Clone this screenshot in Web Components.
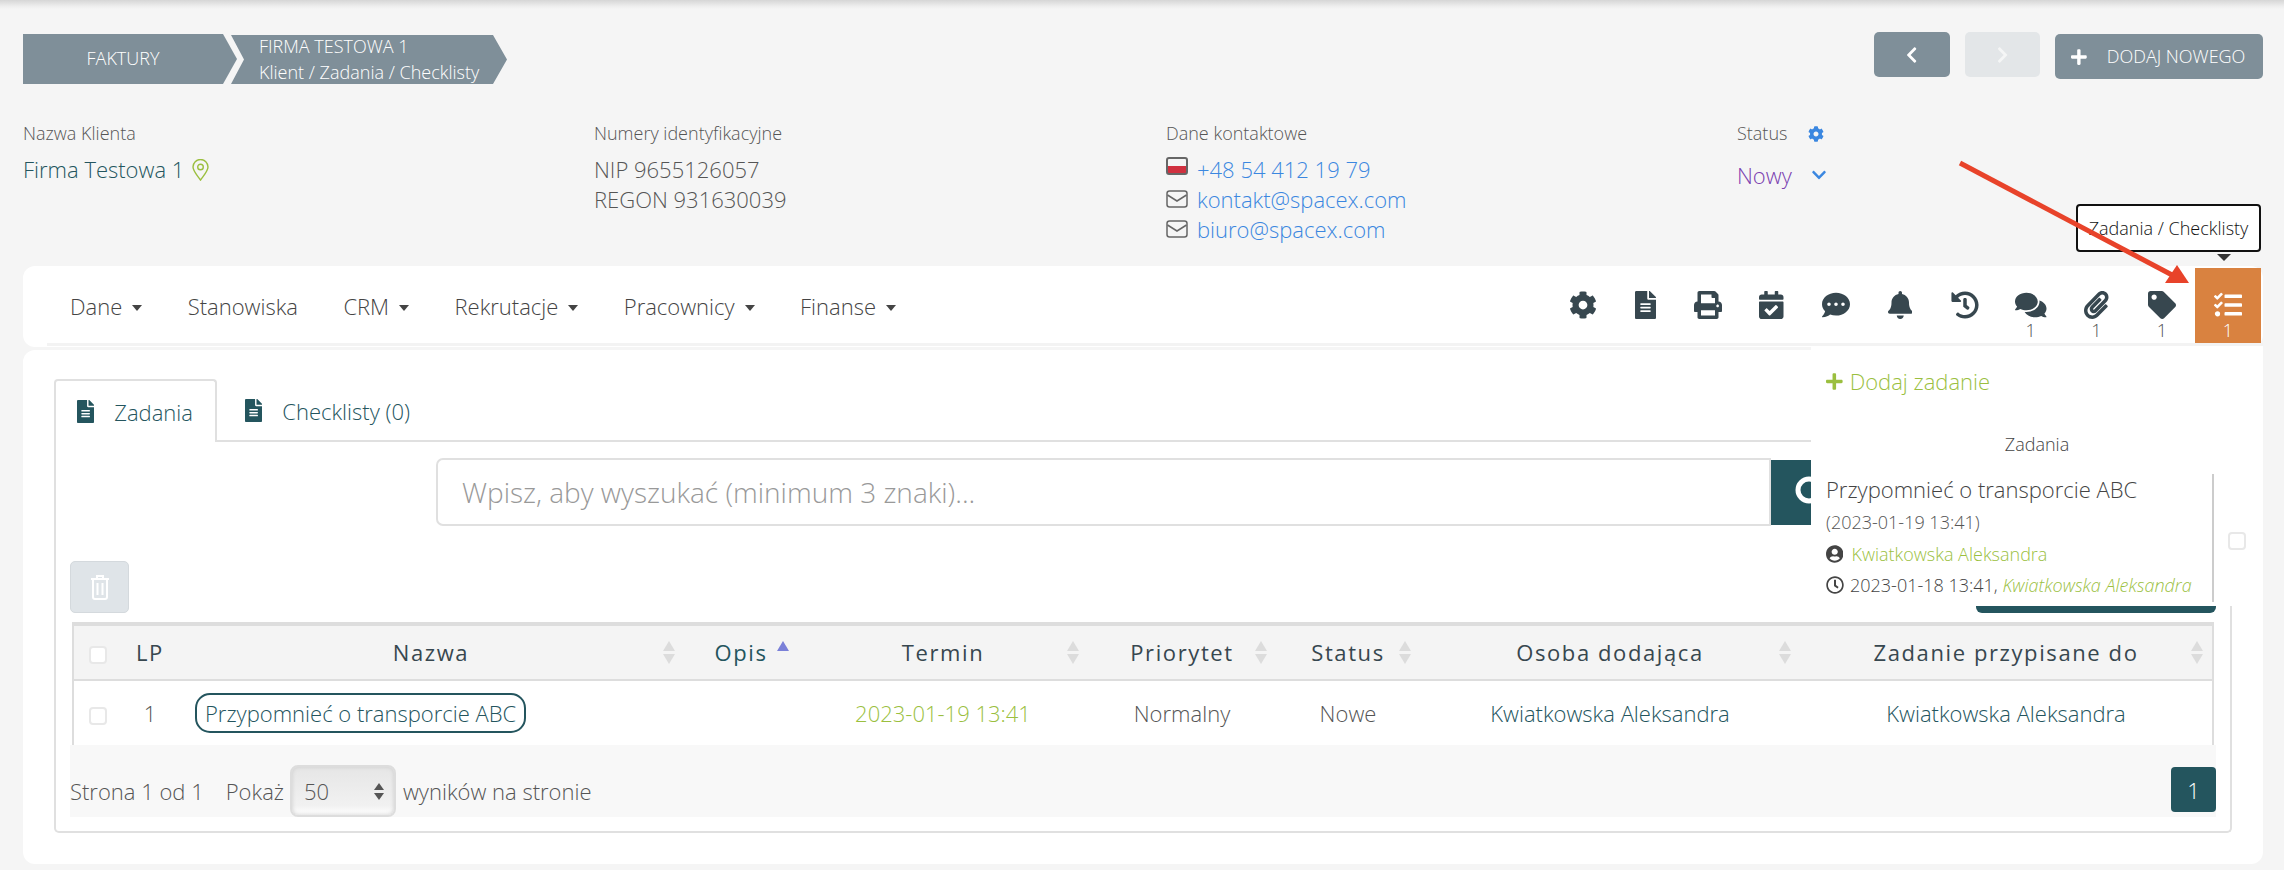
<!DOCTYPE html>
<html lang="pl">
<head>
<meta charset="utf-8">
<title>Firma Testowa 1</title>
<style>
  html, body { margin: 0; padding: 0; overflow: hidden; }
  body {
    width: 2284px; height: 870px; position: relative;
    background: #f5f5f5; color: #555;
    font-family: "Open Sans", "Liberation Sans", sans-serif; font-weight: 300;
  }
</style>
</head>
<body>
<top-shade></top-shade>
<page-header></page-header>
<client-info></client-info>
<nav-bar></nav-bar>
<task-card></task-card>
<red-arrow></red-arrow>

<script>
const ICONS = {
  cog: [512, 512, 'M487.4 315.7l-42.6-24.6c4.3-23.2 4.3-47 0-70.2l42.6-24.6c4.9-2.8 7.1-8.6 5.5-14-11.1-35.6-30-67.8-54.7-94.6-3.8-4.1-10-5.1-14.8-2.3L380.8 110c-17.9-15.4-38.5-27.3-60.8-35.1V25.8c0-5.6-3.9-10.5-9.4-11.7-36.7-8.2-74.3-7.8-109.2 0-5.5 1.2-9.4 6.1-9.4 11.7V75c-22.2 7.9-42.8 19.8-60.8 35.1L88.7 85.5c-4.9-2.8-11-1.9-14.8 2.3-24.7 26.7-43.6 58.9-54.7 94.6-1.7 5.4.6 11.2 5.5 14L67.3 221c-4.3 23.2-4.3 47 0 70.2l-42.6 24.6c-4.9 2.8-7.1 8.6-5.5 14 11.1 35.6 30 67.8 54.7 94.6 3.8 4.1 10 5.1 14.8 2.3l42.6-24.6c17.9 15.4 38.5 27.3 60.8 35.1v49.2c0 5.6 3.9 10.5 9.4 11.7 36.7 8.2 74.3 7.8 109.2 0 5.5-1.2 9.4-6.1 9.4-11.7v-49.2c22.2-7.9 42.8-19.8 60.8-35.1l42.6 24.6c4.9 2.8 11 1.9 14.8-2.3 24.7-26.7 43.6-58.9 54.7-94.6 1.5-5.5-.7-11.3-5.6-14.1zM256 336c-44.1 0-80-35.9-80-80s35.9-80 80-80 80 35.9 80 80-35.9 80-80 80z'],
  file: [384, 512, 'M224 136V0H24C10.7 0 0 10.7 0 24v464c0 13.3 10.7 24 24 24h336c13.3 0 24-10.7 24-24V160H248c-13.2 0-24-10.8-24-24zm64 236c0 6.6-5.4 12-12 12H108c-6.6 0-12-5.4-12-12v-8c0-6.6 5.4-12 12-12h168c6.6 0 12 5.4 12 12v8zm0-64c0 6.6-5.4 12-12 12H108c-6.6 0-12-5.4-12-12v-8c0-6.6 5.4-12 12-12h168c6.6 0 12 5.4 12 12v8zm0-72v8c0 6.6-5.4 12-12 12H108c-6.6 0-12-5.4-12-12v-8c0-6.6 5.4-12 12-12h168c6.6 0 12 5.4 12 12zm96-114.1v6.1H256V0h6.1c6.4 0 12.5 2.5 17 7l97.9 98c4.5 4.5 7 10.6 7 16.9z'],
  print: [512, 512, 'M448 192V77.25c0-8.49-3.37-16.62-9.37-22.63L393.37 9.37c-6-6-14.14-9.37-22.63-9.37H96C78.33 0 64 14.33 64 32v160c-35.35 0-64 28.65-64 64v112c0 8.84 7.16 16 16 16h48v96c0 17.67 14.33 32 32 32h320c17.67 0 32-14.33 32-32v-96h48c8.84 0 16-7.16 16-16V256c0-35.35-28.65-64-64-64zm-64 256H128v-96h256v96zm0-224H128V64h192v48c0 8.84 7.16 16 16 16h48v96zm48 72c-13.25 0-24-10.75-24-24 0-13.26 10.75-24 24-24s24 10.74 24 24c0 13.25-10.75 24-24 24z'],
  calendar: [448, 512, 'M436 160H12c-6.627 0-12-5.373-12-12v-36c0-26.51 21.49-48 48-48h48V12c0-6.627 5.373-12 12-12h40c6.627 0 12 5.373 12 12v52h128V12c0-6.627 5.373-12 12-12h40c6.627 0 12 5.373 12 12v52h48c26.51 0 48 21.49 48 48v36c0 6.627-5.373 12-12 12zM12 192h424c6.627 0 12 5.373 12 12v260c0 26.51-21.49 48-48 48H48c-26.51 0-48-21.49-48-48V204c0-6.627 5.373-12 12-12zm333.296 95.947l-28.169-28.398c-4.667-4.705-12.265-4.736-16.970-.068L194.12 364.665l-45.98-46.352c-4.667-4.705-12.266-4.736-16.971-.068l-28.397 28.17c-4.705 4.667-4.736 12.265-.068 16.970l82.601 83.269c4.667 4.705 12.265 4.736 16.970.068l142.953-141.805c4.705-4.667 4.736-12.265.068-16.970z'],
  dots: [512, 512, 'M256 32C114.6 32 0 125.1 0 240c0 49.6 21.4 95 57 130.7C44.5 421.1 2.7 466 2.2 466.5c-2.2 2.3-2.8 5.7-1.5 8.7S4.8 480 8 480c66.3 0 116-31.8 140.6-51.4 32.7 12.3 69 19.4 107.4 19.4 141.4 0 256-93.1 256-208S397.4 32 256 32zM128 272c-17.7 0-32-14.3-32-32s14.3-32 32-32 32 14.3 32 32-14.3 32-32 32zm128 0c-17.7 0-32-14.3-32-32s14.3-32 32-32 32 14.3 32 32-14.3 32-32 32zm128 0c-17.7 0-32-14.3-32-32s14.3-32 32-32 32 14.3 32 32-14.3 32-32 32z'],
  bell: [448, 512, 'M224 512c35.32 0 63.97-28.65 63.97-64H160.03c0 35.35 28.65 64 63.97 64zm215.39-149.71c-19.32-20.76-55.47-51.99-55.47-154.29 0-77.7-54.48-139.9-127.94-155.16V32c0-17.67-14.32-32-31.98-32s-31.98 14.33-31.98 32v20.84C118.56 68.1 64.08 130.3 64.08 208c0 102.3-36.15 133.53-55.47 154.29-6 6.45-8.66 14.16-8.61 21.71.11 16.4 12.98 32 32.1 32h383.8c19.12 0 32-15.6 32.1-32 .05-7.55-2.61-15.27-8.61-21.71z'],
  history: [512, 512, 'M504 255.531c.253 136.64-111.18 248.372-247.82 248.468-59.015.042-113.223-20.53-155.822-54.911-11.077-8.94-11.905-25.541-1.839-35.607l11.267-11.267c8.609-8.609 22.353-9.551 31.891-1.984C173.062 425.135 212.781 440 256 440c101.705 0 184-82.311 184-184 0-101.705-82.311-184-184-184-48.814 0-93.149 18.969-126.068 49.932l50.754 50.754c10.08 10.08 2.941 27.314-11.313 27.314H24c-8.837 0-16-7.163-16-16V38.627c0-14.254 17.234-21.393 27.314-11.314l49.372 49.372C129.209 34.136 189.552 8 256 8c136.81 0 247.747 110.78 248 247.531zm-180.912 78.784l9.823-12.63c8.138-10.463 6.253-25.542-4.21-33.679L288 256.349V152c0-13.255-10.745-24-24-24h-16c-13.255 0-24 10.745-24 24v135.651l65.409 50.874c10.463 8.137 25.541 6.253 33.679-4.21z'],
  comments: [576, 512, 'M416 192c0-88.4-93.1-160-208-160S0 103.6 0 192c0 34.3 14.1 65.9 38 92-13.4 30.2-35.5 54.2-35.8 54.5-2.2 2.3-2.8 5.7-1.5 8.7S4.8 352 8 352c36.6 0 66.9-12.3 88.7-25 32.2 15.7 70.3 25 111.3 25 114.9 0 208-71.6 208-160zm122 220c23.9-26 38-57.7 38-92 0-66.9-53.5-124.2-129.3-148.1.9 6.6 1.3 13.3 1.3 20.1 0 105.9-107.7 192-240 192-10.8 0-21.3-.8-31.7-1.9C207.8 439.6 281.8 480 368 480c41 0 79.1-9.2 111.3-25 21.8 12.7 52.1 25 88.7 25 3.2 0 6.1-1.9 7.3-4.8 1.3-2.9.7-6.3-1.5-8.7-.3-.3-22.4-24.2-35.8-54.5z'],
  clip: [448, 512, 'M43.246 466.142c-58.43-60.289-57.341-157.511 1.386-217.581L254.392 34c44.316-45.332 116.351-45.336 160.671 0 43.89 44.894 43.943 117.329 0 162.276L232.214 383.128c-29.855 30.537-78.633 30.111-107.982-.998-28.275-29.97-27.368-77.473 1.452-106.953l143.743-146.835c6.182-6.314 16.312-6.422 22.626-.241l22.861 22.379c6.315 6.182 6.422 16.312.241 22.626L171.427 319.927c-4.932 5.045-5.236 13.428-.648 18.292 4.372 4.634 11.245 4.711 15.688.165l182.849-186.851c19.613-20.062 19.613-52.725-.011-72.798-19.189-19.627-49.957-19.637-69.154 0L90.39 293.295c-34.763 35.56-35.299 93.12-1.191 128.313 34.01 35.093 88.985 35.137 123.058.286l172.06-175.999c6.177-6.319 16.307-6.433 22.626-.256l22.877 22.364c6.319 6.177 6.434 16.307.256 22.626l-172.06 175.998c-59.576 60.938-155.943 60.216-214.77-.485z'],
  tag: [512, 512, 'M0 252.118V48C0 21.49 21.49 0 48 0h204.118a48 48 0 0 1 33.941 14.059l211.882 211.882c18.745 18.745 18.745 49.137 0 67.882L293.823 497.941c-18.745 18.745-49.137 18.745-67.882 0L14.059 286.059A48 48 0 0 1 0 252.118zM112 64c-26.51 0-48 21.49-48 48s21.49 48 48 48 48-21.49 48-48-21.49-48-48-48z'],
  tasks: [512, 512, 'M139.61 35.5a12 12 0 0 0-17 0L58.93 98.81l-22.7-22.12a12 12 0 0 0-17 0L3.53 92.41a12 12 0 0 0 0 17l47.59 47.4a12.78 12.78 0 0 0 17.61 0l15.59-15.62L156.52 69a12.09 12.09 0 0 0 .09-17zm0 159.19a12 12 0 0 0-17 0l-63.68 63.72-22.7-22.1a12 12 0 0 0-17 0L3.53 252a12 12 0 0 0 0 17L51 316.5a12.77 12.77 0 0 0 17.6 0l15.7-15.69 72.2-72.22a12 12 0 0 0 .09-16.9zM64 368c-26.49 0-48.59 21.5-48.59 48S37.53 464 64 464a48 48 0 0 0 0-96zm432 16H208a16 16 0 0 0-16 16v32a16 16 0 0 0 16 16h288a16 16 0 0 0 16-16v-32a16 16 0 0 0-16-16zm0-320H208a16 16 0 0 0-16 16v32a16 16 0 0 0 16 16h288a16 16 0 0 0 16-16V80a16 16 0 0 0-16-16zm0 160H208a16 16 0 0 0-16 16v32a16 16 0 0 0 16 16h288a16 16 0 0 0 16-16v-32a16 16 0 0 0-16-16z'],
  user: [496, 512, 'M248 8C111 8 0 119 0 256s111 248 248 248 248-111 248-248S385 8 248 8zm0 96c48.6 0 88 39.4 88 88s-39.4 88-88 88-88-39.4-88-88 39.4-88 88-88zm0 344c-58.7 0-111.3-26.6-146.5-68.2 18.8-35.4 55.6-59.8 98.5-59.8 2.4 0 4.8.4 7.1 1.1 13 4.2 26.6 6.9 40.9 6.9 14.3 0 28-2.7 40.9-6.9 2.3-.7 4.7-1.1 7.1-1.1 42.9 0 79.7 24.4 98.5 59.8C359.3 421.4 306.7 448 248 448z'],
  clock: [512, 512, 'M256 8C119 8 8 119 8 256s111 248 248 248 248-111 248-248S393 8 256 8zm0 448c-110.5 0-200-89.5-200-200S145.5 56 256 56s200 89.5 200 200-89.5 200-200 200zm61.8-104.4l-84.9-61.7c-3.1-2.3-4.9-5.9-4.9-9.7V116c0-6.6 5.4-12 12-12h32c6.6 0 12 5.4 12 12v141.7l66.8 48.6c5.4 3.9 6.5 11.4 2.6 16.8L334.6 349c-3.9 5.3-11.4 6.5-16.8 2.6z'],
  plus: [448, 512, 'M416 208H272V64c0-17.67-14.33-32-32-32h-32c-17.67 0-32 14.33-32 32v144H32c-17.67 0-32 14.33-32 32v32c0 17.67 14.33 32 32 32h144v144c0 17.67 14.33 32 32 32h32c17.67 0 32-14.33 32-32V304h144c17.67 0 32-14.33 32-32v-32c0-17.67-14.33-32-32-32z'],
  left: [320, 512, 'M34.52 239.03L228.87 44.69c9.37-9.37 24.57-9.37 33.94 0l22.67 22.67c9.36 9.36 9.37 24.52.04 33.9L131.49 256l154.02 154.75c9.34 9.38 9.32 24.54-.04 33.9l-22.67 22.67c-9.37 9.37-24.57 9.37-33.94 0L34.52 272.97c-9.37-9.37-9.37-24.57 0-33.94z'],
  right: [320, 512, 'M285.476 272.971L91.132 467.314c-9.373 9.373-24.569 9.373-33.941 0l-22.667-22.667c-9.357-9.357-9.375-24.522-.04-33.901L188.505 256 34.484 101.255c-9.335-9.379-9.317-24.544.04-33.901l22.667-22.667c9.373-9.373 24.569-9.373 33.941 0L285.475 239.03c9.373 9.372 9.373 24.568.001 33.941z'],
  down: [448, 512, 'M207.029 381.476L12.686 187.132c-9.373-9.373-9.373-24.569 0-33.941l22.667-22.667c9.357-9.357 24.522-9.375 33.901-.04L224 284.505l154.745-154.021c9.379-9.335 24.544-9.317 33.901.04l22.667 22.667c9.373 9.373 9.373 24.569 0 33.941L240.971 381.476c-9.373 9.372-24.569 9.372-33.942 0z']
};

// shared base, saves repeating attachShadow everywhere
class Base extends HTMLElement {
  render(html) {
    if (!this.shadowRoot) this.attachShadow({ mode: 'open' });
    this.shadowRoot.innerHTML = html;
  }
}

class UiIcon extends Base {
  connectedCallback() {
    const [w, h, d] = ICONS[this.getAttribute('name')];
    const size = Number(this.getAttribute('size') || 16);
    this.render(`
      <style>:host { display: inline-flex; line-height: 0; } svg { display: block; fill: currentColor; }</style>
      <svg width="${size * w / h}" height="${size}" viewBox="0 0 ${w} ${h}"><path d="${d}"/></svg>`);
  }
}
customElements.define('ui-icon', UiIcon);

class TopShade extends Base {
  connectedCallback() {
    this.render(`<style>:host { display: block; height: 9px; background: linear-gradient(#d6d6d6, #eeeeee 70%, #f5f5f5); }</style>`);
  }
}
customElements.define('top-shade', TopShade);

class PageHeader extends Base {
  connectedCallback() {
    this.render(`
      <style>
        :host { display: flex; justify-content: space-between; height: 50px; margin-top: 25px; padding: 0 21px 0 23px; }
        .crumbs { display: flex; color: #fff; font-size: 18px; }
        .crumb { background: #7f8f99; display: flex; flex-direction: column; justify-content: center; padding-bottom: 2px; box-sizing: border-box; }
        .one { width: 214px; height: 50px; align-items: center; padding-right: 14px;
          clip-path: polygon(0 0, 200px 0, 214px 50%, 200px 100%, 0 100%); }
        .two { width: 276px; height: 49px; margin: 1px 0 0 -6px; padding-left: 28px; line-height: 26px;
          clip-path: polygon(0 0, 262px 0, 276px 50%, 262px 100%, 0 100%, 13px 50%); }
        .actions { display: flex; gap: 15px; align-items: flex-start; }
        .btn { display: flex; align-items: center; justify-content: center; background: #7f8f99; color: #fff; border-radius: 5px; height: 45px; }
        .nav { width: 76px; margin-top: -2px; }
        .off { width: 75px; background: #e3e6e8; color: #f5f6f6; }
        .add { width: 208px; font-size: 18px; gap: 20px; justify-content: flex-start; padding-left: 16px; box-sizing: border-box; }
        .add span { margin-top: -2px; }
      </style>
      <div class="crumbs">
        <div class="crumb one">FAKTURY</div>
        <div class="crumb two"><span>FIRMA TESTOWA 1</span><span>Klient / Zadania / Checklisty</span></div>
      </div>
      <div class="actions">
        <div class="btn nav"><ui-icon name="left" size="18"></ui-icon></div>
        <div class="btn nav off"><ui-icon name="right" size="18"></ui-icon></div>
        <div class="btn add"><ui-icon name="plus" size="18"></ui-icon><span>DODAJ NOWEGO</span></div>
      </div>`);
  }
}
customElements.define('page-header', PageHeader);

class InfoCol extends Base {
  connectedCallback() {
    this.render(`
      <style>
        :host { display: block; font-size: 22px; line-height: 30px; }
        .label { font-size: 18px; line-height: 24px; height: 33px; color: #555; display: flex; align-items: flex-start; gap: 21px; }
        slot[name=tool] { display: inline-flex; }
      </style>
      <div class="label"><span>${this.getAttribute('label')}</span><slot name="tool"></slot></div>
      <slot></slot>`);
  }
}
customElements.define('info-col', InfoCol);

class ClientInfo extends Base {
  connectedCallback() {
    this.render(`
      <style>
        :host { display: grid; grid-template-columns: 571px 572px 571px 1fr; margin-top: 37px; padding-left: 23px; height: 145px; }
        .teal { color: #24555e; }
        .row { display: flex; align-items: center; gap: 9px; height: 30px; }
        a { color: #3b87e0; text-decoration: none; }
        .flag { width: 18px; height: 14px; border: 2px solid #666; border-radius: 3px; margin-top: -6px;
          background: linear-gradient(#f4f4f4 50%, #d0303f 50%); }
        .pin { color: #9bbf3f; margin: 0 0 0 8px; vertical-align: -3px; }
        .status { color: #7a40b0; display: flex; align-items: center; gap: 20px; height: 30px; margin-top: 6px; }
        .status ui-icon { color: #3b87e0; }
        svg { display: block; }
      </style>
      <info-col label="Nazwa Klienta">
        <div class="teal">Firma Testowa 1<svg class="pin" style="display:inline-block" width="17" height="22" viewBox="0 0 17 22" fill="none" stroke="currentColor" stroke-width="1.4"><path d="M8.5 21C5 16 1 12 1 8a7.5 7.5 0 0 1 15 0c0 4-4 8-7.500 13z"/><circle cx="8.500" cy="8" r="2.800"/></svg></div>
      </info-col>
      <info-col label="Numery identyfikacyjne">
        <div>NIP 9655126057</div>
        <div>REGON 931630039</div>
      </info-col>
      <info-col label="Dane kontaktowe">
        <div class="row"><span class="flag"></span><a>+48 54 412 19 79</a></div>
        <div class="row"><svg width="22" height="18" viewBox="0 0 22 18" fill="none" stroke="#666" stroke-width="1.500"><rect x="1" y="1" width="20" height="16" rx="2.500"/><path d="M1.500 5l9.500 6 9.500-6"/></svg><a>kontakt@spacex.com</a></div>
        <div class="row"><svg width="22" height="18" viewBox="0 0 22 18" fill="none" stroke="#666" stroke-width="1.500"><rect x="1" y="1" width="20" height="16" rx="2.500"/><path d="M1.500 5l9.500 6 9.500-6"/></svg><a>biuro@spacex.com</a></div>
      </info-col>
      <info-col label="Status">
        <ui-icon slot="tool" name="cog" size="16" style="color:#3b87e0;margin-top:5px"></ui-icon>
        <div class="status"><span>Nowy</span><ui-icon name="down" size="16"></ui-icon></div>
      </info-col>`);
  }
}
customElements.define('client-info', ClientInfo);

class ToolButton extends Base {
  connectedCallback() {
    const count = this.getAttribute('count');
    this.render(`
      <style>
        :host { display: flex; flex-direction: column; align-items: center; width: ${this.getAttribute('w')}px; height: 75px; padding-top: 23px; box-sizing: border-box; color: #37474f; }
        :host([active]) { background: #d98240; color: #fff; }
        .n { font-size: 18px; line-height: 20px; margin-top: 1px; color: #555; }
        :host([active]) .n { color: #fff; }
      </style>
      <ui-icon name="${this.getAttribute('icon')}" size="28"></ui-icon>
      ${count ? `<div class="n">${count}</div>` : ''}`);
  }
}
customElements.define('tool-button', ToolButton);

class NavBar extends Base {
  connectedCallback() {
    const menu = [['Dane', 1], ['Stanowiska', 0], ['CRM', 1], ['Rekrutacje', 1], ['Pracownicy', 1], ['Finanse', 1]];
    const tools = [['cog', 0, 62], ['file', 0, 62.5], ['print', 0, 63], ['calendar', 0, 64], ['dots', 0, 64.5], ['bell', 0, 64], ['history', 0, 65.5], ['comments', 1, 66.5], ['clip', 1, 65], ['tag', 1, 66], ['tasks', 1, 66]];
    this.render(`
      <style>
        :host { display: flex; justify-content: space-between; position: relative; z-index: 3; margin: 0 21px 0 23px; height: 81px; padding: 2px 2px 0 47px; box-sizing: border-box; background: #fff; border-radius: 12px; }
        :host::after { content: ""; position: absolute; left: 24px; right: 0; top: 77px; height: 3px; background: #f3f3f3; }
        .menu { display: flex; gap: 45.4px; font-size: 22px; height: 78px; align-items: center; color: #444; margin-top: -1px; }
        .item { display: flex; align-items: center; gap: 10px; }
        .caret { width: 0; height: 0; border: 5.500px solid transparent; border-top: 6px solid #444; border-bottom: 0; margin-top: 3px; }
        .tools { display: flex; position: relative; z-index: 1; }
        .tip { position: absolute; left: 2053px; top: -62px; width: 185px; height: 48px; box-sizing: border-box; display: flex; align-items: center; justify-content: center;
          background: #fff; border: 2px solid #111; border-radius: 4px; color: #111; font-size: 18px; }
        .tip::after { content: ""; position: absolute; left: 139px; top: 48px; border: 7px solid transparent; border-top: 7px solid #333; border-bottom: 0; }
      </style>
      <div class="menu">${menu.map(([t, c]) => `<div class="item"><span>${t}</span>${c ? '<i class="caret"></i>' : ''}</div>`).join('')}</div>
      <div class="tools">${tools.map(([i, n, w], idx) => `<tool-button icon="${i}" w="${w}" ${n ? `count="${n}"` : ''} ${idx === 10 ? 'active' : ''}></tool-button>`).join('')}</div>
      <div class="tip">Zadania / Checklisty</div>`);
  }
}
customElements.define('nav-bar', NavBar);

class CheckBox extends Base {
  connectedCallback() {
    this.render(`<style>:host { display: inline-block; width: 18px; height: 18px; box-sizing: border-box; border: 2px solid #e8e8e8; border-radius: 4px; background: #fff; vertical-align: middle; }</style>`);
  }
}
customElements.define('check-box', CheckBox);

class TaskPopup extends Base {
  connectedCallback() {
    this.render(`
      <style>
        :host { display: block; position: absolute; left: 1788px; top: -7px; width: 452px; height: 263px; background: #fff; padding: 26px 0 0 15px; box-sizing: border-box; z-index: 2; }
        .add { display: flex; align-items: center; gap: 7px; color: #9bbf3f; font-size: 22px; line-height: 24px; }
        .title { margin: 39px 0 0 -15px; text-align: center; font-size: 18px; line-height: 24px; color: #444; }
        .list { display: flex; align-items: center; gap: 14px; margin-top: 18px; }
        .item { width: 388px; height: 128px; box-sizing: border-box; border-right: 2px solid #ccc; line-height: 32px; font-size: 18px; color: #555; }
        .head { font-size: 22px; color: #444; margin: -1px 0 1px; }
        .line { display: flex; align-items: center; gap: 8px; color: #444; height: 32px; white-space: nowrap; }
        .last { gap: 6px; margin-top: -1px; }
        .green { color: #9bbf3f; }
        em { color: #9bbf3f; }
        check-box { margin-top: 6px; }
        .bar { position: absolute; left: 165px; top: 263px; width: 240px; height: 7px; background: #24555e; border-radius: 0 0 6px 6px; }
      </style>
      <div class="add"><ui-icon name="plus" size="19"></ui-icon><span>Dodaj zadanie</span></div>
      <div class="title">Zadania</div>
      <div class="list">
        <div class="item">
          <div class="head">Przypomnieć o transporcie ABC</div>
          <div>(2023-01-19 13:41)</div>
          <div class="line"><ui-icon name="user" size="18"></ui-icon><span class="green">Kwiatkowska Aleksandra</span></div>
          <div class="line last"><ui-icon name="clock" size="18"></ui-icon><span>2023-01-18 13:41, <em>Kwiatkowska Aleksandra</em></span></div>
        </div>
        <check-box></check-box>
      </div>
      <div class="bar"></div>`);
  }
}
customElements.define('task-popup', TaskPopup);

class TaskCard extends Base {
  connectedCallback() {
    const cols = [50, 56, 506, 114, 290, 188, 144, 380, 414];
    const heads = ['', 'LP', 'Nazwa', 'Opis', 'Termin', 'Priorytet', 'Status', 'Osoba dodająca', 'Zadanie przypisane do'];
    this.render(`
      <style>
        :host { display: block; position: relative; margin: 3px 21px 0 23px; height: 514px; padding: 29px 31px 0; box-sizing: border-box; background: #fff; border-radius: 12px; }
        .tabs { display: flex; height: 63px; box-sizing: border-box; border-bottom: 2px solid #e0e0e0; font-size: 22px; color: #24555e; }
        .tab { display: flex; align-items: center; gap: 20px; height: 63px; box-sizing: border-box; padding: 0 0 0 23px; }
        .tab.on { width: 163px; background: #fff; border: 2px solid #e0e0e0; border-bottom: 0; border-radius: 4px 4px 0 0; padding-left: 21px; }
        .tab.two { padding-left: 28px; }
        .panel { height: 391px; box-sizing: border-box; border: 2px solid #e0e0e0; border-top: 0; border-radius: 0 0 5px 5px; padding: 16px 14px 0; }
        .search { display: flex; padding-left: 366px; height: 68px; }
        .input { width: 1335px; box-sizing: border-box; border: 2px solid #e0e0e0; border-radius: 7px 0 0 7px; display: flex; align-items: center; padding-left: 24px; font-size: 28px; color: #999; }
        .go { width: 100px; height: 65px; margin-top: 2px; background: #24555e; color: #fff; display: flex; align-items: center; padding-left: 24px; box-sizing: border-box; }
        .del { width: 59px; height: 52px; box-sizing: border-box; margin-top: 35px; background: #dfe4e8; border: 1px solid #d4d9dd; border-radius: 5px; display: flex; align-items: center; justify-content: center; }
        table { width: 2142px; margin: 9px 2px 0; table-layout: fixed; border-collapse: separate; border-spacing: 0; font-size: 22px; }
        th { position: relative; box-sizing: border-box; height: 59px; padding: 0 0 2px; background: #f4f4f4; border-top: 4px solid #ddd; border-bottom: 2px solid #ddd; color: #37474f; font-weight: 400; letter-spacing: 1.6px; }
        td { box-sizing: border-box; height: 64px; padding: 0; text-align: center; color: #555; }
        th:first-child, td:first-child { border-left: 2px solid #ddd; }
        th:last-child, td:last-child { border-right: 2px solid #ddd; }
        th.active { color: #24555e; }
        .sort { position: absolute; right: 9px; top: 15px; display: flex; flex-direction: column; gap: 3px; }
        .sort i { width: 0; height: 0; border: 6px solid transparent; }
        .sort .up { border-top: 0; border-bottom: 10px solid #dcdcdc; }
        .sort .dn { border-bottom: 0; border-top: 10px solid #dcdcdc; }
        .sort.asc .up { border-bottom-color: #7a80d8; }
        .sort.asc .dn { visibility: hidden; }
        .pill { display: inline-block; border: 2px solid #24555e; border-radius: 15px; color: #24555e; padding: 0 8px; line-height: 36px; }
        .green { color: #9bbf3f; }
        .teal { color: #24555e; }
        .foot { display: flex; align-items: center; height: 72px; padding-top: 20px; box-sizing: border-box; background: #f8f8f8; font-size: 22px; color: #555; }
        .foot .pok { margin-left: 22px; }
        .sel { width: 106px; height: 52px; box-sizing: border-box; margin: 0 7px 0 6px; border: 2px solid #ddd; border-radius: 8px; display: flex; align-items: center; justify-content: space-between; padding: 0 10px 0 12px;
          background: linear-gradient(#e6e6e6, #f1f1f1 80%, #fff); box-shadow: inset 0 0 4px #ccc; }
        .updn { display: flex; flex-direction: column; gap: 3px; }
        .updn i { width: 0; height: 0; border: 5px solid transparent; }
        .updn .a { border-top: 0; border-bottom: 7px solid #555; }
        .updn .b { border-bottom: 0; border-top: 7px solid #555; }
        .page { margin-left: auto; width: 45px; height: 45px; margin-top: -3px; background: #24555e; color: #fff; border-radius: 4px; display: flex; align-items: center; justify-content: center; }
      </style>
      <div class="tabs">
        <div class="tab on"><ui-icon name="file" size="23"></ui-icon><span>Zadania</span></div>
        <div class="tab two"><ui-icon name="file" size="23"></ui-icon><span>Checklisty (0)</span></div>
      </div>
      <div class="panel">
        <div class="search">
          <div class="input">Wpisz, aby wyszukać (minimum 3 znaki)...</div>
          <div class="go"><svg width="34" height="34" viewBox="0 0 34 34" fill="none" stroke="#fff" stroke-width="5"><circle cx="14" cy="14" r="11"/></svg></div>
        </div>
        <div class="del"><svg width="20" height="26" viewBox="0 0 20 26" fill="none" stroke="#fff" stroke-width="2"><path d="M1 5h18M7 5V2h6v3M3 5v18a2 2 0 0 0 2 2h10a2 2 0 0 0 2-2V5M7.500 9v12M12.500 9v12"/></svg></div>
        <table>
          <colgroup>${cols.map(w => `<col style="width:${w}px">`).join('')}</colgroup>
          <thead><tr>
            <th><check-box></check-box></th>
            ${heads.slice(1).map(h => `<th class="${h === 'Opis' ? 'active' : ''}">${h}${h === 'LP' ? '' : `<span class="sort ${h === 'Opis' ? 'asc' : ''}"><i class="up"></i><i class="dn"></i></span>`}</th>`).join('')}
          </tr></thead>
          <tbody><tr>
            <td><check-box></check-box></td>
            <td>1</td>
            <td style="text-align:left;padding-left:17px"><span class="pill">Przypomnieć o transporcie ABC</span></td>
            <td></td>
            <td class="green">2023-01-19 13:41</td>
            <td>Normalny</td>
            <td>Nowe</td>
            <td class="teal">Kwiatkowska Aleksandra</td>
            <td class="teal">Kwiatkowska Aleksandra</td>
          </tr></tbody>
        </table>
        <div class="foot">
          <span>Strona 1 od 1</span>
          <span class="pok">Pokaż</span>
          <div class="sel"><span>50</span><span class="updn"><i class="a"></i><i class="b"></i></span></div>
          <span>wyników na stronie</span>
          <div class="page">1</div>
        </div>
      </div>
      <task-popup></task-popup>`);
  }
}
customElements.define('task-card', TaskCard);

class RedArrow extends Base {
  connectedCallback() {
    this.render(`
      <style>:host { position: absolute; left: 0; top: 0; width: 2284px; height: 870px; pointer-events: none; z-index: 9; } svg { display: block; }</style>
      <svg width="2284" height="870" viewBox="0 0 2284 870">
        <path d="M1960 163L2174 276" stroke="#e8432a" stroke-width="5" fill="none"/>
        <path d="M2189 283L2165 283L2177 265Z" fill="#e8432a"/>
      </svg>`);
  }
}
customElements.define('red-arrow', RedArrow);
</script>
</body>
</html>
